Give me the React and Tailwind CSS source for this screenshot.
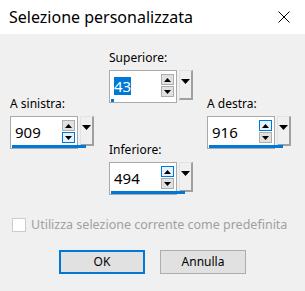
import React from 'react';

const font = { fontFamily: '"Segoe UI", "Noto Sans", "Liberation Sans", sans-serif' };

function Tri({ down }) {
  return (
    <svg width="7" height="4" viewBox="0 0 7 4" className="block">
      {down ? <polygon points="0,0 7,0 3.5,4" fill="#000" /> : <polygon points="0,4 7,4 3.5,0" fill="#000" />}
    </svg>
  );
}

function SpinBtn({ down, hot }) {
  return (
    <div
      className={
        'w-[13px] h-[11px] flex items-center justify-center border ' +
        (hot ? 'border-[#0078d7] bg-[#e5f1fb]' : 'border-[#adadad] bg-[#e1e1e1]')
      }
    >
      <Tri down={down} />
    </div>
  );
}

function SpinField({ label, value, bar, selected, hotUp, hotDown }) {
  return (
    <div className="flex flex-col">
      <div className="text-[12px] leading-[16px] text-black">{label}</div>
      <div className="relative flex items-start mt-[4px] h-[33px]">
        <div className="relative w-[68px] h-[33px] border border-[#a9a9a9] bg-white flex items-center pb-[2px]">
          <span
            className={
              'ml-[4px] text-[15px] leading-[18px] ' +
              (selected ? 'bg-[#0078d7] text-white' : 'text-black')
            }
          >
            {value}
          </span>
          <div className="absolute right-[2px] top-[3px] flex flex-col gap-[1px]">
            <SpinBtn hot={hotUp} />
            <SpinBtn down hot={hotDown} />
          </div>
        </div>
        <div className="ml-[2px] w-[14px] h-[30px] bg-[#f0f0f0] border-l border-t border-[#e3e3e3] border-r-2 border-b-2 border-r-[#a0a0a0] border-b-[#a0a0a0] flex justify-center pt-[8px]">
          <svg width="9" height="5" viewBox="0 0 9 5" className="block">
            <polygon points="0,0 9,0 4.5,5" fill="#000" />
          </svg>
        </div>
        <div className="absolute left-[2px] bottom-[1px] h-[3px] bg-[#0078d7]" style={{ width: bar }} />
      </div>
    </div>
  );
}

export default function App() {
  return (
    <div className="w-[305px] h-[291px] bg-[#f0f0f0] flex flex-col" style={font}>
      <div className="h-[34px] bg-white flex items-center justify-between pl-[9px] pr-[15px]">
        <span className="text-[16px] text-black">Selezione personalizzata</span>
        <svg width="12" height="12" viewBox="0 0 12 12">
          <path d="M0.5 0.5 L11.5 11.5 M11.5 0.5 L0.5 11.5" stroke="#000" strokeWidth="1" />
        </svg>
      </div>

      <div className="flex pl-[10px] pt-[16px]">
        <div className="pt-[46px]">
          <SpinField label="A sinistra:" value="909" bar="74px" hotDown />
        </div>
        <div className="ml-[15px] flex flex-col gap-[39px]">
          <SpinField label="Superiore:" value="43" bar="3px" selected />
          <SpinField label="Inferiore:" value="494" bar="74px" hotUp />
        </div>
        <div className="ml-[14px] pt-[46px]">
          <SpinField label="A destra:" value="916" bar="74px" hotUp />
        </div>
      </div>

      <div className="flex items-center mt-[21px] pl-[12px]">
        <div className="w-[14px] h-[14px] border border-[#cccccc] bg-white" />
        <span className="ml-[5px] text-[12.5px] text-[#a0a0a0]">Utilizza selezione corrente come predefinita</span>
      </div>

      <div className="flex pl-[59px] gap-[15px] mt-[15px]">
        <button className="w-[86px] h-[24px] border-2 border-[#0078d7] bg-[#e1e1e1] text-[12px] text-black">OK</button>
        <button className="w-[86px] h-[24px] border border-[#adadad] bg-[#e1e1e1] text-[12px] text-black">Annulla</button>
      </div>
    </div>
  );
}
